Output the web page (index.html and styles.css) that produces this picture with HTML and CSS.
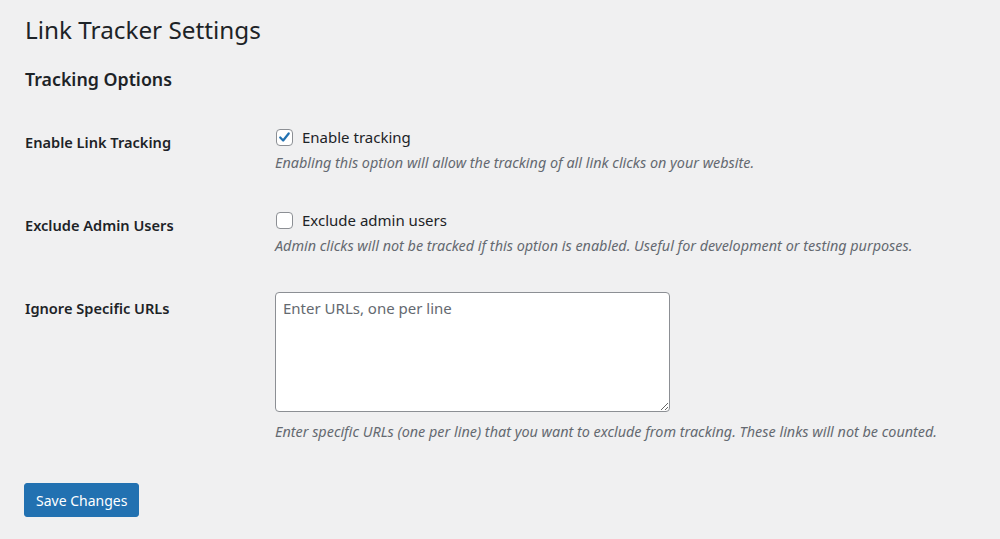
FILE: index.html
```html
<!DOCTYPE html>
<html lang="en">
<head>
<meta charset="utf-8">
<title>Link Tracker Settings</title>
<link rel="stylesheet" href="styles.css">
</head>
<body>
<div class="wrap">
  <h1 class="page-title">Link Tracker Settings</h1>
  <form class="settings-form">
    <h2 class="section-title">Tracking Options</h2>
    <table class="form-table">
      <tbody>
        <tr class="row row-first">
          <th scope="row" class="row-label">Enable Link Tracking</th>
          <td class="row-field">
            <label class="check-label">
              <span class="checkbox is-checked">
                <svg viewBox="0 0 20 20" width="17" height="17" aria-hidden="true"><path d="M4.3 10 L8.2 14 L15.6 4.6" fill="none" stroke="#2271b1" stroke-width="3" stroke-linecap="round" stroke-linejoin="round"/></svg>
              </span>
              <span class="check-text">Enable tracking</span>
            </label>
            <p class="description">Enabling this option will allow the tracking of all link clicks on your website.</p>
          </td>
        </tr>
        <tr class="row">
          <th scope="row" class="row-label">Exclude Admin Users</th>
          <td class="row-field">
            <label class="check-label">
              <span class="checkbox"></span>
              <span class="check-text">Exclude admin users</span>
            </label>
            <p class="description">Admin clicks will not be tracked if this option is enabled. Useful for development or testing purposes.</p>
          </td>
        </tr>
        <tr class="row">
          <th scope="row" class="row-label">Ignore Specific URLs</th>
          <td class="row-field">
            <textarea class="url-box" placeholder="Enter URLs, one per line"></textarea>
            <p class="description desc-after-box">Enter specific URLs (one per line) that you want to exclude from tracking. These links will not be counted.</p>
          </td>
        </tr>
      </tbody>
    </table>
    <p class="submit"><button type="button" class="button-primary">Save Changes</button></p>
  </form>
</div>
</body>
</html>
```

FILE: styles.css
```css
html, body {
  margin: 0;
  padding: 0;
  background: #f0f0f1;
}
body {
  font-family: "Noto Sans", "Open Sans", sans-serif;
  color: #1d2327;
  font-size: 15px;
}
.wrap {
  padding: 14px 20px 0 25px;
}
.page-title {
  margin: 0;
  font-size: 24.3px;
  font-weight: 400;
  line-height: 32px;
  color: #1d2327;
}
.section-title {
  margin: 21px 0 0;
  font-size: 17.8px;
  font-weight: 600;
  line-height: 25px;
  color: #1d2327;
}
.form-table {
  border-collapse: collapse;
  margin-top: 20px;
}
.row-label {
  width: 241px;
  padding: 20px 0 22px 0;
  text-align: left;
  vertical-align: top;
  font-size: 14.6px;
  font-weight: 600;
  line-height: 20px;
}
.row-field {
  padding: 15px 10px 22px 9px;
  vertical-align: top;
}
.check-label {
  display: flex;
  align-items: center;
  gap: 9px;
  line-height: 20px;
  font-size: 15px;
  padding-left: 1px;
}
.checkbox {
  width: 15px;
  height: 15px;
  border: 1px solid #8c8f94;
  border-radius: 4px;
  background: #fff;
  display: inline-flex;
  align-items: center;
  justify-content: center;
  margin-top: 1px;
}
.checkbox svg {
  display: block;
}
.description {
  margin: 6px 0 0;
  font-size: 14.4px;
  line-height: 20px;
  font-style: italic;
  color: #646970;
}
.url-box {
  display: block;
  box-sizing: border-box;
  width: 395px;
  height: 120px;
  margin: -1px 0 0;
  padding: 5px 7px;
  border: 1px solid #8c8f94;
  border-radius: 4px;
  background: #fff;
  font-family: "Noto Sans", "Open Sans", sans-serif;
  font-size: 15px;
  line-height: 20px;
  color: #2c3338;
}
.url-box::placeholder {
  color: #646970;
  opacity: 1;
}
.desc-after-box {
  margin-top: 10px;
}
.submit {
  margin: 19px 0 0;
}
.button-primary {
  height: 34px;
  margin-left: -1px;
  padding: 0 11px;
  background: #2271b1;
  border: 1px solid #2271b1;
  border-radius: 3px;
  color: #fff;
  font-family: "Noto Sans", "Open Sans", sans-serif;
  font-size: 14px;
  cursor: pointer;
}
```
